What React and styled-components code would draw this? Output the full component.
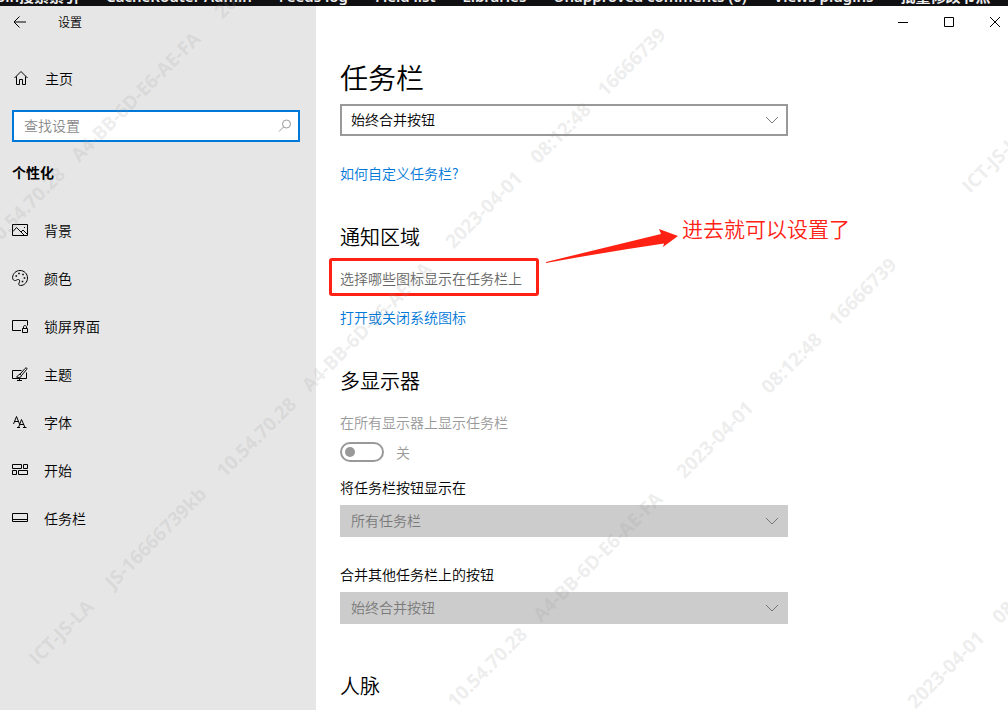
import React, { useState } from 'react';
import styled, { createGlobalStyle } from 'styled-components';

const menus = ['oin搜索索引', 'CacheRouter Admin', 'Feeds log', 'Field list', 'Libraries', 'Unapproved comments (0)', 'Views plugins', '批量修改节点'];

const navItems = [
    { id: 'background', label: '背景' },
    { id: 'colors', label: '颜色' },
    { id: 'lock', label: '锁屏界面' },
    { id: 'themes', label: '主题' },
    { id: 'fonts', label: '字体' },
    { id: 'start', label: '开始' },
    { id: 'taskbar', label: '任务栏' },
];

// each word sits on the diagonal that starts at the row origin
const markWords = [
    [0, 'ICT-JS-LA'],
    [108, 'JS-16666739kb'],
    [265, '10.54.70.28'],
    [386, 'A4-BB-6D-E6-AE-FA'],
    [589, '2023-04-01'],
    [709, '08:12:48'],
    [804, '16666739'],
];

const markRows = [[-194, 436], [37, 666], [268, 896], [499, 1126], [970, 194]];

const icons = {
    background: (
        <>
            <path d="M.5 2.500h15v11H.5z" />
            <path d="M1 9.500l3.500-4 8 8M9 10l2-2 4.500 4.500" />
            <path d="M12 5.500h1" />
        </>
    ),
    colors: (
        <>
            <path d="M8 .5C12.200.5 15.500 3.800 15.500 8c0 4.200-3.300 7.500-6.800 7.500-2 0-2.400-1.200-1.600-2.600.8-1.400.8-3.200-.6-3.400C4.800 9.300 4 11 2.500 10.500.9 10 .5 8.600.6 7.300.9 3.500 4 .5 8 .5z" />
            <path strokeWidth="1.6" d="M3.500 6h1.600M6.200 3.500h1.600M10.200 4.500h1.600M11.700 8h1.600M9.700 11.500h1.600" />
        </>
    ),
    lock: (
        <>
            <path d="M9 12.500H.5v-10h15v5" />
            <path d="M10.500 10.500h5v4h-5zM11.500 10.500V9c0-2 3-2 3 0v1.500" />
        </>
    ),
    themes: (
        <>
            <path d="M9.500 4.500H.5v8h14v-6M7.500 12.500v2M5 14.500h5" />
            <path d="M14 1.800c1 0 1.200.8.700 1.500L9.500 9.500 8 8.200 13 2.500zM8 8.200c-2 0-1.500 2-3.500 2.800 2 1 5 .5 5-1.500" />
        </>
    ),
    fonts: (
        <>
            <path d="M1.500 10L4.500 2.500 7.500 10M2.500 7.500h4" />
            <path d="M5 13.500h3M6.500 13.500L9.500 5.500l3.500 8M7.500 10.500h4.500M11 13.500h3.500" />
        </>
    ),
    start: (
        <path d="M.5 2.500h9v4h-9zM11.500 2.500h4v4h-4zM.5 8.500h4v4h-4zM6.500 8.500h9v4h-9z" />
    ),
    taskbar: (
        <path d="M.5 3.500h15v8H.5zM.5 9.500h15" />
    ),
};

const App = () => {
    const [active, setActive] = useState('taskbar');
    const [keyword, setKeyword] = useState('');

    return (
        <Page>
            <GlobalStyle />
            <MenuBar>
                {menus.map(menu => <MenuItem key={menu}>{menu}</MenuItem>)}
            </MenuBar>
            <Window>
                <Sidebar>
                    <TitleRow>
                        <BackButton aria-label='返回'>
                            <Icon width='14' height='14' viewBox='0 0 14 14'>
                                <path d="M6.500 1.500L1 7l5.500 5.500M1 7h12" />
                            </Icon>
                        </BackButton>
                        <WindowTitle>设置</WindowTitle>
                    </TitleRow>
                    <HomeButton>
                        <Icon width='16' height='16' viewBox='0 0 16 16'>
                            <path d="M1.500 8L8 1.500 14.500 8M3.500 6.500v8h3v-5h3v5h3v-8" />
                        </Icon>
                        主页
                    </HomeButton>
                    <SearchBox>
                        <SearchInput
                            aria-label='查找设置'
                            placeholder='查找设置'
                            value={keyword}
                            onChange={(e) => setKeyword(e.target.value)}
                        />
                        <SearchIcon width='14' height='14' viewBox='0 0 14 14'>
                            <circle cx="8.500" cy="5" r="4" />
                            <path d="M5.500 8L1 12.500" />
                        </SearchIcon>
                    </SearchBox>
                    <Category>个性化</Category>
                    <Nav>
                        {navItems.map(({ id, label }) => (
                            <NavButton
                                key={id}
                                aria-current={active === id ? 'page' : undefined}
                                onClick={() => setActive(id)}
                            >
                                <Icon width='16' height='16' viewBox='0 0 16 16'>{icons[id]}</Icon>
                                {label}
                            </NavButton>
                        ))}
                    </Nav>
                </Sidebar>
                <Main>
                    <Controls>
                        <ControlButton aria-label='最小化'>
                            <Icon width='10' height='10' viewBox='0 0 10 10'><path d="M0 5.500h10" /></Icon>
                        </ControlButton>
                        <ControlButton aria-label='最大化'>
                            <Icon width='10' height='10' viewBox='0 0 10 10'><path d="M.5.5h9v9h-9z" /></Icon>
                        </ControlButton>
                        <ControlButton aria-label='关闭'>
                            <Icon width='10' height='10' viewBox='0 0 10 10'><path d="M0 0l10 10M10 0L0 10" /></Icon>
                        </ControlButton>
                    </Controls>
                    <Content>
                        <PageTitle>任务栏</PageTitle>
                        <Dropdown label='合并任务栏按钮' hideLabel value='始终合并按钮' />
                        <HelpLink href='#help'>如何自定义任务栏?</HelpLink>
                        <SectionTitle>通知区域</SectionTitle>
                        <Highlight>
                            <MutedLink href='#icons'>选择哪些图标显示在任务栏上</MutedLink>
                            <Note>
                                <Arrow width='132' height='36' viewBox='0 0 132 36'>
                                    <path d="M0 33L115 5 113 0 132 7 117 18 118 14.500Q60 23 0 34z" />
                                </Arrow>
                                进去就可以设置了
                            </Note>
                        </Highlight>
                        <Link href='#system'>打开或关闭系统图标</Link>
                        <SectionTitle>多显示器</SectionTitle>
                        <ToggleLabel htmlFor='all-displays'>在所有显示器上显示任务栏</ToggleLabel>
                        <ToggleRow>
                            <Toggle id='all-displays' type='checkbox' role='switch' disabled />
                            关
                        </ToggleRow>
                        <FieldGroup>
                            <Dropdown label='将任务栏按钮显示在' value='所有任务栏' disabled />
                            <Dropdown label='合并其他任务栏上的按钮' value='始终合并按钮' disabled />
                        </FieldGroup>
                        <SectionTitle>人脉</SectionTitle>
                    </Content>
                </Main>
            </Window>
            <Watermark aria-hidden='true'>
                {markRows.map(([x, y]) => (
                    <g key={`${x}_${y}`} transform={`translate(${x} ${y}) rotate(-45)`}>
                        {markWords.map(([offset, word]) => <text key={word} x={offset}>{word}</text>)}
                    </g>
                ))}
            </Watermark>
        </Page>
    );
};

const Dropdown = ({ label, hideLabel, value, disabled }) => (
    <Field>
        {!hideLabel && <FieldLabel htmlFor={label}>{label}</FieldLabel>}
        <SelectBox>
            <Select id={label} aria-label={label} disabled={disabled} defaultValue={value}>
                <option>{value}</option>
            </Select>
            <Chevron width='14' height='8' viewBox='0 0 14 8'>
                <path d="M1 1l6 6 6-6" />
            </Chevron>
        </SelectBox>
    </Field>
);

const GlobalStyle = createGlobalStyle`
    * {
        box-sizing: border-box;
    }
    body {
        margin: 0;
        color: #000;
        font-family: 'Noto Sans CJK SC', sans-serif;
        font-size: 14px;
        font-weight: 350;
        line-height: 20px;
    }
    button, input, select {
        font: inherit;
        color: inherit;
    }
`;

const Page = styled.div`
    position: relative;
    display: flex;
    flex-direction: column;
    height: 100vh;
    overflow: hidden;
`;

const MenuBar = styled.div`
    display: flex;
    flex-shrink: 0;
    align-items: flex-end;
    gap: 27px;
    height: 6px;
    overflow: hidden;
    background-color: #101012;
    color: #eee;
    font-family: 'Noto Sans', 'Noto Sans CJK SC', sans-serif;
    font-size: 15px;
    font-weight: 600;
`;

const MenuItem = styled.span`
    flex-shrink: 0;
    white-space: nowrap;

    &:first-child {
        margin-left: -4px;
    }
`;

const Window = styled.div`
    display: flex;
    flex: 1;
    min-height: 0;
`;

const Sidebar = styled.aside`
    flex: 0 0 316px;
    background-color: #e6e6e6;
`;

const TitleRow = styled.div`
    display: flex;
    align-items: center;
    height: 32px;
    padding-left: 13px;
    gap: 31px;
`;

const PlainButton = styled.button`
    display: flex;
    align-items: center;
    padding: 0;
    border: none;
    background: none;
`;

const BackButton = styled(PlainButton)`
    height: 32px;
`;

const WindowTitle = styled.span`
    font-size: 12px;
`;

const Icon = styled.svg`
    flex-shrink: 0;
    fill: none;
    stroke: #000;
`;

const HomeButton = styled(PlainButton)`
    width: 100%;
    height: 48px;
    margin-top: 16px;
    padding-left: 13px;
    gap: 16px;
`;

const SearchBox = styled.div`
    display: flex;
    align-items: center;
    height: 32px;
    margin: 8px 16px 0 12px;
    padding: 0 6px 0 10px;
    border: 2px solid #0078d7;
    background-color: #fff;
`;

const SearchInput = styled.input`
    flex: 1;
    min-width: 0;
    padding: 0 0 2px;
    border: none;
    outline: none;
    background: none;

    &::placeholder {
        color: #8a8a8a;
        opacity: 1;
    }
`;

const SearchIcon = styled(Icon)`
    stroke: #999;
`;

const Category = styled.h2`
    margin: 20px 12px 24px;
    font-size: 14px;
    font-weight: 700;
    line-height: 20px;
`;

const Nav = styled.nav`
    display: flex;
    flex-direction: column;
`;

const NavButton = styled(PlainButton)`
    height: 48px;
    padding-left: 12px;
    gap: 16px;
`;

const Main = styled.main`
    flex: 1;
    min-width: 0;
    overflow: hidden;
    background-color: #fff;
`;

const Controls = styled.div`
    display: flex;
    justify-content: flex-end;
    height: 32px;
    margin-right: -10px;
`;

const ControlButton = styled(PlainButton)`
    justify-content: center;
    width: 46px;
`;

const Content = styled.div`
    display: flex;
    flex-direction: column;
    align-items: flex-start;
    padding: 19px 24px 0;
`;

const PageTitle = styled.h1`
    margin: 0 0 7px;
    font-size: 28px;
    font-weight: 350;
    line-height: 40px;
`;

const SectionTitle = styled.h2`
    margin: 41px 0 8px;
    font-size: 20px;
    font-weight: 350;
    line-height: 26px;
`;

const Field = styled.div`
    width: 100%;
    max-width: 448px;

    & + & {
        margin-top: 27px;
    }
`;

const FieldGroup = styled.div`
    width: 100%;
    padding-bottom: 8px;
`;

const FieldLabel = styled.label`
    display: block;
    margin-bottom: 8px;
`;

const SelectBox = styled.div`
    display: grid;
    align-items: center;

    & > * {
        grid-area: 1 / 1;
    }
`;

const Select = styled.select`
    appearance: none;
    width: 100%;
    height: 32px;
    padding: 0 32px 2px 9px;
    border: 2px solid #999;
    border-radius: 0;
    background-color: #fff;

    &:disabled {
        border-color: #ccc;
        background-color: #ccc;
        color: #7a7a7a;
        opacity: 1;
    }
`;

const Chevron = styled(Icon)`
    justify-self: end;
    margin-right: 9px;
    stroke: #777;
    pointer-events: none;
`;

const Link = styled.a`
    color: #0078d7;
    text-decoration: none;
`;

const HelpLink = styled(Link)`
    margin-top: 27px;
`;

const Highlight = styled.div`
    position: relative;
    margin: 0 0 11px -11px;
    padding: 7px 14px 5px 8px;
    border: 3px solid #ff2113;
    border-radius: 3px;
`;

const MutedLink = styled(Link)`
    color: #666;
`;

const Note = styled.div`
    position: absolute;
    left: 100%;
    bottom: 28px;
    display: flex;
    align-items: flex-start;
    margin-left: 10px;
    gap: 4px;
    color: #ff2113;
    font-size: 21px;
    line-height: 28px;
    white-space: nowrap;
`;

const Arrow = styled.svg`
    margin-top: 15px;
    fill: #ff2113;
`;

const ToggleLabel = styled.label`
    margin-top: 10px;
    color: #999;
`;

const ToggleRow = styled.div`
    display: flex;
    align-items: center;
    gap: 12px;
    margin: 10px 0 15px;
    color: #999;
`;

const Toggle = styled.input`
    appearance: none;
    display: flex;
    align-items: center;
    width: 44px;
    height: 20px;
    margin: 0;
    padding: 0 3px;
    border: 2px solid #999;
    border-radius: 10px;

    &::before {
        content: '';
        width: 10px;
        height: 10px;
        border-radius: 50%;
        background-color: #999;
    }
`;

const Watermark = styled.svg`
    position: absolute;
    inset: 0;
    width: 100%;
    height: 100%;
    fill: rgba(150, 150, 150, 0.18);
    font-family: 'Open Sans', sans-serif;
    font-size: 19px;
    font-weight: 700;
    pointer-events: none;
`;

export default App;
